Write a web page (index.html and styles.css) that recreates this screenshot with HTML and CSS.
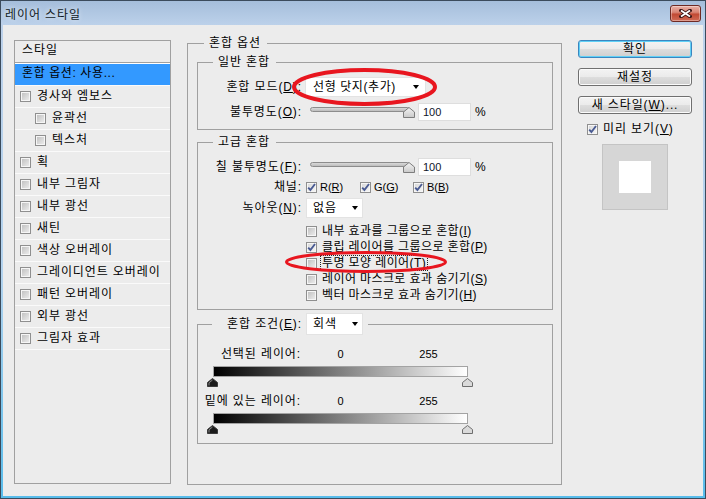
FILE: index.html
```html
<!DOCTYPE html>
<html lang="ko">
<head>
<meta charset="utf-8">
<title>레이어 스타일</title>
<link rel="stylesheet" href="styles.css">
</head>
<body>
<div class="window">
  <div class="titlebar">
    <span class="title">레이어 스타일</span>
    <div class="close-btn">
      <svg width="13" height="9" viewBox="0 0 13 9"><path d="M2 1.5 L11 7.5 M11 1.5 L2 7.5" stroke="#3a1414" stroke-width="3.6" stroke-linecap="square"/><path d="M2 1.5 L11 7.5 M11 1.5 L2 7.5" stroke="#fff" stroke-width="1.8"/></svg>
    </div>
  </div>
  <div class="client">
    <div class="stylelist">
      <div class="list-head">스타일</div>
      <div class="list-item selected">혼합 옵션: 사용...</div>
      <div class="list-item"><span class="cb"></span><span>경사와 엠보스</span></div>
      <div class="list-item sub"><span class="cb"></span><span>윤곽선</span></div>
      <div class="list-item sub"><span class="cb"></span><span>텍스처</span></div>
      <div class="list-item"><span class="cb"></span><span>획</span></div>
      <div class="list-item"><span class="cb"></span><span>내부 그림자</span></div>
      <div class="list-item"><span class="cb"></span><span>내부 광선</span></div>
      <div class="list-item"><span class="cb"></span><span>새틴</span></div>
      <div class="list-item"><span class="cb"></span><span>색상 오버레이</span></div>
      <div class="list-item"><span class="cb"></span><span>그레이디언트 오버레이</span></div>
      <div class="list-item"><span class="cb"></span><span>패턴 오버레이</span></div>
      <div class="list-item"><span class="cb"></span><span>외부 광선</span></div>
      <div class="list-item"><span class="cb"></span><span>그림자 효과</span></div>
    </div>

    <fieldset class="panel">
      <legend class="panel-legend">혼합 옵션</legend>

      <fieldset class="group g1">
        <legend class="group-legend">일반 혼합</legend>
        <div class="row r-mode">
          <span class="lbl">혼합 모드(<u>D</u>):</span>
          <div class="combo combo-mode"><span>선형 닷지(추가)</span><i class="arrow"></i></div>
        </div>
        <div class="row r-op">
          <span class="lbl">불투명도(<u>O</u>):</span>
          <div class="slider">
            <div class="track"></div>
            <svg class="thumb" width="12" height="11" viewBox="0 0 12 11"><defs><linearGradient id="tg1" x1="0" y1="0" x2="0" y2="1"><stop offset="0" stop-color="#f4f4f4"/><stop offset="1" stop-color="#c9c9c9"/></linearGradient></defs><path d="M6 0.5 L11.5 5 L11.5 10.5 L0.5 10.5 L0.5 5 Z" fill="url(#tg1)" stroke="#7d7d7d"/></svg>
          </div>
          <div class="num">100</div>
          <span class="pct">%</span>
        </div>
      </fieldset>

      <fieldset class="group g2">
        <legend class="group-legend">고급 혼합</legend>
        <div class="row r-fill">
          <span class="lbl">칠 불투명도(<u>F</u>):</span>
          <div class="slider">
            <div class="track"></div>
            <svg class="thumb" width="12" height="11" viewBox="0 0 12 11"><defs><linearGradient id="tg2" x1="0" y1="0" x2="0" y2="1"><stop offset="0" stop-color="#f4f4f4"/><stop offset="1" stop-color="#c9c9c9"/></linearGradient></defs><path d="M6 0.5 L11.5 5 L11.5 10.5 L0.5 10.5 L0.5 5 Z" fill="url(#tg2)" stroke="#7d7d7d"/></svg>
          </div>
          <div class="num">100</div>
          <span class="pct">%</span>
        </div>
        <div class="row r-chan">
          <span class="lbl">채널:</span>
          <span class="chan ch-r"><span class="cb on"><svg width="9" height="9" viewBox="0 0 9 9"><path d="M1.2 4.6 L3.4 7 L8 1" stroke="#4a5b93" stroke-width="1.9" fill="none"/></svg></span><span class="ctl">R(<u>R</u>)</span></span>
          <span class="chan ch-g"><span class="cb on"><svg width="9" height="9" viewBox="0 0 9 9"><path d="M1.2 4.6 L3.4 7 L8 1" stroke="#4a5b93" stroke-width="1.9" fill="none"/></svg></span><span class="ctl">G(<u>G</u>)</span></span>
          <span class="chan ch-b"><span class="cb on"><svg width="9" height="9" viewBox="0 0 9 9"><path d="M1.2 4.6 L3.4 7 L8 1" stroke="#4a5b93" stroke-width="1.9" fill="none"/></svg></span><span class="ctl">B(<u>B</u>)</span></span>
        </div>
        <div class="row r-knock">
          <span class="lbl">녹아웃(<u>N</u>):</span>
          <div class="combo combo-small"><span>없음</span><i class="arrow"></i></div>
        </div>
        <div class="checks">
          <div class="chkrow"><span class="cb"></span><span class="ctext">내부 효과를 그룹으로 혼합(<u>I</u>)</span></div>
          <div class="chkrow"><span class="cb on"><svg width="9" height="9" viewBox="0 0 9 9"><path d="M1.2 4.6 L3.4 7 L8 1" stroke="#4a5b93" stroke-width="1.9" fill="none"/></svg></span><span class="ctext">클립 레이어를 그룹으로 혼합(<u>P</u>)</span></div>
          <div class="chkrow"><span class="cb"></span><span class="ctext focus">투명 모양 레이어(<u>T</u>)</span></div>
          <div class="chkrow"><span class="cb"></span><span class="ctext">레이어 마스크로 효과 숨기기(<u>S</u>)</span></div>
          <div class="chkrow"><span class="cb"></span><span class="ctext">벡터 마스크로 효과 숨기기(<u>H</u>)</span></div>
        </div>
      </fieldset>

      <fieldset class="group g3">
        <legend class="cond-legend">
          <span class="lbl-cond">혼합 조건(<u>E</u>):</span>
          <div class="combo combo-small combo-tall"><span>회색</span><i class="arrow"></i></div>
        </legend>
        <div class="vrow r-sel"><span class="vlbl">선택된 레이어:</span><span class="v0">0</span><span class="v255">255</span></div>
        <div class="gbar"></div>
        <div class="thumbs">
          <svg width="11" height="9" viewBox="0 0 11 9"><path d="M5.5 0.5 L10.5 4.5 L10.5 8.5 L0.5 8.5 L0.5 4.5 Z" fill="#1b1b1b" stroke="#3a3a3a"/><path d="M5.5 2 L2 4.8 L2 7.5" stroke="#8a8a8a" fill="none"/></svg>
          <svg width="11" height="9" viewBox="0 0 11 9"><path d="M5.5 0.5 L10.5 4.5 L10.5 8.5 L0.5 8.5 L0.5 4.5 Z" fill="#dadada" stroke="#6e6e6e"/></svg>
        </div>
        <div class="vrow r-under"><span class="vlbl">밑에 있는 레이어:</span><span class="v0">0</span><span class="v255">255</span></div>
        <div class="gbar"></div>
        <div class="thumbs">
          <svg width="11" height="9" viewBox="0 0 11 9"><path d="M5.5 0.5 L10.5 4.5 L10.5 8.5 L0.5 8.5 L0.5 4.5 Z" fill="#1b1b1b" stroke="#3a3a3a"/><path d="M5.5 2 L2 4.8 L2 7.5" stroke="#8a8a8a" fill="none"/></svg>
          <svg width="11" height="9" viewBox="0 0 11 9"><path d="M5.5 0.5 L10.5 4.5 L10.5 8.5 L0.5 8.5 L0.5 4.5 Z" fill="#dadada" stroke="#6e6e6e"/></svg>
        </div>
      </fieldset>
    </fieldset>

    <div class="side">
      <div class="btn default">확인</div>
      <div class="btn">재설정</div>
      <div class="btn">새 스타일(<u>W</u>)...</div>
      <div class="preview-chk"><span class="cb on"><svg width="9" height="9" viewBox="0 0 9 9"><path d="M1.2 4.6 L3.4 7 L8 1" stroke="#4a5b93" stroke-width="1.9" fill="none"/></svg></span><span>미리 보기(<u>V</u>)</span></div>
      <div class="preview"><div class="preview-sq"></div></div>
    </div>
  </div>

  <svg class="marks" width="706" height="499" viewBox="0 0 706 499">
    <ellipse cx="364.5" cy="87" rx="70.5" ry="17" fill="none" stroke="#e8161f" stroke-width="4"/>
    <ellipse cx="366" cy="262" rx="79.5" ry="9.5" fill="none" stroke="#e8161f" stroke-width="3"/>
  </svg>
</div>
</body>
</html>
```

FILE: styles.css
```css
* { box-sizing: border-box; }
html, body { margin: 0; padding: 0; }
body {
  width: 706px; height: 499px; overflow: hidden; background: #fff;
  font-family: "Liberation Sans", "Noto Sans CJK KR", sans-serif;
  font-size: 12px; color: #000; letter-spacing: 0.9px;
}
u { text-decoration: underline; text-underline-offset: 1px; }

.window {
  position: relative; width: 706px; height: 499px;
  border: 1px solid #3b4b5c;
  padding: 0 2px 2px;
  display: flex; flex-direction: column;
  background: linear-gradient(#a5bedb 0, #bcd1ea 24px, #b3d3ee 55%, #58bceb 100%);
}
.titlebar {
  flex: none; height: 24px; display: flex; justify-content: space-between;
  align-items: flex-start; padding: 4px 0 0 2px;
}
.title {
  margin-top: 2px; line-height: 16px; font-size: 12px; color: #111a24;
  text-shadow: 0 0 5px rgba(255,255,255,0.8);
}
.close-btn {
  width: 31px; height: 17px; margin-right: 2px;
  border: 1px solid #6e2a24; border-radius: 3px;
  background: linear-gradient(#eab2a8 0%, #d98474 42%, #c24a34 55%, #d06b56 100%);
  box-shadow: inset 0 0 0 1px rgba(255,255,255,0.35);
  display: flex; align-items: center; justify-content: center;
}

.client {
  flex: 1; background: #ececec; display: flex; align-items: flex-start;
  padding: 15px 0 0 11px;
}

/* left list */
.stylelist {
  flex: none; width: 157px; height: 444px; border: 1px solid #a0a0a0;
  background: #ececec;
}
.list-head {
  height: 22px; line-height: 18px; padding-left: 7px;
  border-bottom: 1px solid #a0a0a0; box-shadow: 0 1px 0 #fff; margin-bottom: 1px;
}
.list-item {
  height: 22px; display: flex; align-items: center; gap: 6px;
  padding: 0 0 1px 5px; border-bottom: 1px solid #fafafa; line-height: 16px;
  white-space: nowrap;
}
.list-item.sub { padding-left: 20px; }
.list-item.selected { background: #3399ff; padding-left: 7px; padding-bottom: 3px; letter-spacing: 0.6px; }

.cb {
  flex: none; width: 11px; height: 11px; border: 1px solid #8f8f8f;
  background: linear-gradient(135deg, #bdbdbd, #f0f0f0);
  box-shadow: inset 0 0 0 1px #f6f6f6;
  display: flex; align-items: center; justify-content: center; overflow: visible;
}
.cb.on { background: linear-gradient(135deg, #d6d6d6, #f7f7f7); }
.cb svg { flex: none; }

/* middle panel */
.panel {
  flex: none; width: 375px; min-width: 0; margin: -4px 0 0 16px;
  padding: 5px 8px 40px 9px; border: 1px solid #a0a0a0;
}
.panel-legend { margin-left: 7px; padding: 0 6px 0 5px; line-height: 14px; }
.group {
  margin: 0; min-width: 0; border: 1px solid #a0a0a0; padding: 0;
}
.group-legend { margin-left: 15px; padding: 0 6px 0 5px; line-height: 14px; }
.g1 { padding-bottom: 7px; }
.g2 { margin-top: 5px; padding-bottom: 6px; }
.g3 { margin-top: 3px; padding-bottom: 9px; }

.row { display: flex; align-items: center; height: 20px; }
.lbl { flex: none; width: 104px; text-align: right; line-height: 16px; white-space: nowrap; }
.r-mode { margin-top: 8px; }
.r-op { margin-top: 5px; }
.r-fill { margin-top: 8px; }
.r-chan { margin-top: 2px; height: 16px; }
.r-knock { margin-top: 3px; }

.combo {
  flex: none; display: flex; align-items: center; justify-content: space-between;
  height: 20px; background: #fff; border: 1px solid #e3e3e3; line-height: 16px;
  white-space: nowrap;
}
.combo-mode { width: 121px; margin-left: 3px; padding: 0 6px 0 7px; letter-spacing: 0.6px; }
.combo-small { width: 57px; margin-left: 4px; padding: 0 4px 0 6px; }
.combo-tall { height: 22px; margin-left: 4px; }
.arrow {
  width: 0; height: 0; border-top: 4px solid #000;
  border-left: 3.5px solid transparent; border-right: 3.5px solid transparent;
}

.slider { position: relative; flex: none; width: 107px; height: 20px; margin-left: 8px; padding-top: 5px; }
.track {
  width: 100px; height: 5px; border: 1px solid #8c8c8c; border-radius: 3px;
  background: linear-gradient(#d9d9d9, #bdbdbd);
}
.thumb { position: absolute; left: 93px; top: 5px; }
.num {
  flex: none; width: 53px; height: 18px; margin-left: 1px; background: #fff;
  border: 1px solid #dedede; font-size: 11px; line-height: 16px; padding-left: 4px;
  color: #10142a; letter-spacing: 0;
}
.pct { margin-left: 4px; font-size: 12px; letter-spacing: 0; }

.chan { flex: none; display: flex; align-items: center; gap: 3px; }
.ctl { font-size: 11px; line-height: 14px; letter-spacing: 0; }
.ch-r { width: 54px; margin-left: 4px; }
.ch-g { width: 53px; }

.checks { margin-top: 5px; padding-left: 108px; }
.chkrow { height: 16px; display: flex; align-items: center; gap: 5px; }
.ctext { line-height: 14px; white-space: nowrap; letter-spacing: 0.4px; }
.ctext.focus { margin-left: -1px; padding: 0 1px; outline: 1px dotted #222; outline-offset: 0; }

.cond-legend { margin-left: 14px; padding: 0 5px 0 0; display: flex; align-items: center; }
.lbl-cond { width: 90px; text-align: right; line-height: 16px; white-space: nowrap; }

.vrow { display: flex; align-items: center; height: 16px; line-height: 16px; }
.vlbl { flex: none; width: 103px; text-align: right; white-space: nowrap; }
.v0 { flex: none; width: 79px; text-align: center; font-size: 11px; letter-spacing: 0; }
.v255 { flex: none; width: 97px; text-align: center; font-size: 11px; letter-spacing: 0; }
.r-sel { margin-top: 11px; }
.r-under { margin-top: 6px; }
.gbar {
  margin: 4px 0 0 15px; width: 255px; height: 11px; border: 1px solid #a3a3a3;
  background: linear-gradient(to right, #000, #fff);
}
.thumbs { margin: 1px 0 0 9px; width: 266px; height: 9px; display: flex; justify-content: space-between; }
.thumbs svg { display: block; }

/* right side */
.side { flex: none; width: 114px; margin-left: 16px; display: flex; flex-direction: column; }
.btn {
  height: 18px; margin-bottom: 10px; display: flex; align-items: center; justify-content: center;
  border: 1px solid #707070; border-radius: 3px; line-height: 16px; white-space: nowrap;
  background: linear-gradient(#f3f3f3 0%, #ebebeb 48%, #dddddd 52%, #cfcfcf 100%);
  box-shadow: inset 0 0 0 1px #fbfbfb;
}
.btn.default {
  border-color: #3a86c0;
  box-shadow: inset 0 0 0 1px #5fd0f6;
}
.side .btn:nth-child(3) { margin-bottom: 0; }
.preview-chk {
  margin-top: 7px; height: 16px; padding-left: 9px; display: flex; align-items: center; gap: 5px;
  line-height: 16px; white-space: nowrap;
}
.preview {
  margin: 7px 0 0 24px; width: 66px; height: 66px; border: 1px solid #c4c4c4;
  background: #d6d6d6; display: flex; align-items: center; justify-content: center;
}
.preview-sq { width: 32px; height: 32px; background: #fff; }

.marks { position: absolute; left: -1px; top: -1px; pointer-events: none; }
```
